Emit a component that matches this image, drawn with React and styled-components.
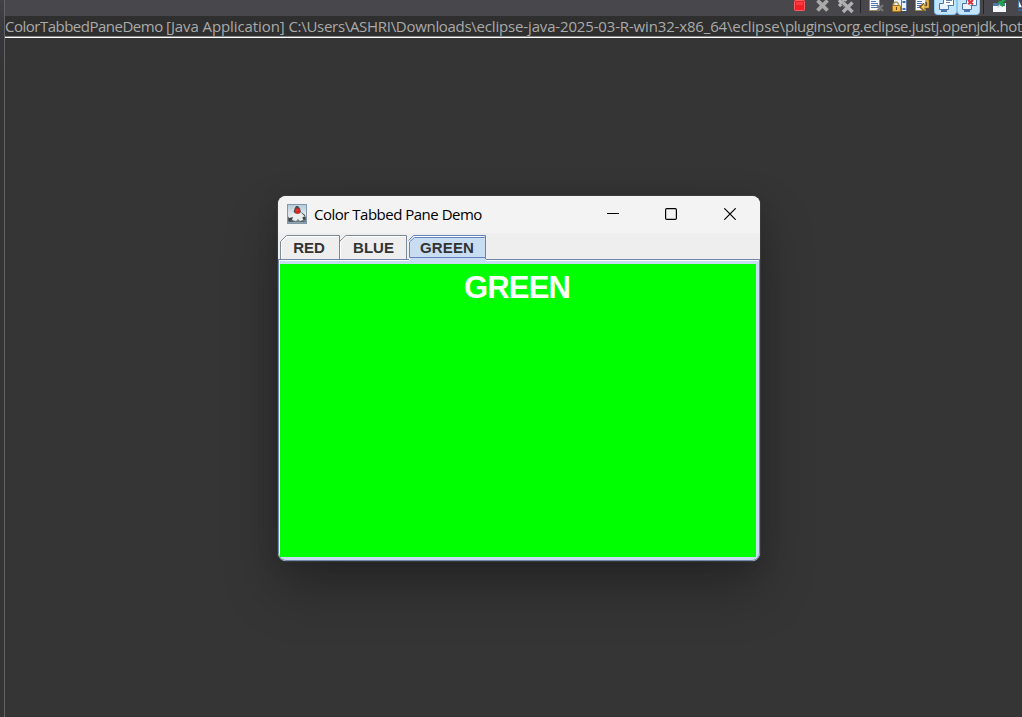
import React from 'react';
import styled, { createGlobalStyle } from 'styled-components';

const GlobalStyle = createGlobalStyle`
  * { box-sizing: border-box; }
  body { margin: 0; background: #353535; overflow: hidden; }
`;

const Workbench = styled.div`
  width: 1022px;
  height: 717px;
  display: flex;
  overflow: hidden;
  background: #353535;
`;

const Sash = styled.div`
  flex: none;
  width: 5px;
  background: linear-gradient(#434247 0, #37363a 36px, #353535 70px);
  border-right: 1px solid #626266;
`;

const Console = styled.main`
  flex: 1;
  min-width: 0;
  display: flex;
  flex-direction: column;
`;

const Toolbar = styled.div`
  flex: none;
  height: 16px;
  background: #48474c;
  display: flex;
  justify-content: flex-end;
  overflow: hidden;
`;

const ToolIcons = styled.svg`
  display: block;
  flex: none;
`;

const LaunchLabel = styled.div`
  flex: none;
  height: 22px;
  background: #2f2f2f;
  border-bottom: 1px solid #fff;
  box-shadow: inset 0 -1px #858585;
  color: #aaa;
  font: 15px/21px "Open Sans", "Noto Sans", sans-serif;
  white-space: pre;
  overflow: hidden;
`;

const Part = styled.span`
  letter-spacing: ${(p) => p.$track}px;
`;

const Desktop = styled.div`
  flex: 1;
  display: flex;
  align-items: flex-start;
  padding: 158px 0 0 273px;
`;

const Frame = styled.section`
  width: 482px;
  height: 365px;
  display: flex;
  flex-direction: column;
  border-radius: 8px;
  overflow: hidden;
  background: #eee;
  box-shadow: 0 0 0 1px rgba(75, 75, 75, 0.45), 0 28px 54px rgba(0, 0, 0, 0.28),
    0 2px 22px rgba(0, 0, 0, 0.12);
`;

const TitleBar = styled.header`
  flex: none;
  height: 37px;
  padding: 0 0 1px 9px;
  display: flex;
  align-items: center;
  background: #f3f3f3;
`;

const Title = styled.h1`
  flex: 1;
  margin: 0 0 0 7px;
  color: #000;
  font: 400 15px/20px "Open Sans", "Noto Sans", sans-serif;
  letter-spacing: -0.5px;
  white-space: nowrap;
`;

const Caption = styled.button`
  flex: none;
  width: ${(p) => p.$width}px;
  height: 36px;
  padding: 0;
  border: 0;
  background: none;
  display: flex;
  align-items: center;
  justify-content: center;
`;

const TabStrip = styled.nav`
  flex: none;
  height: 27px;
  padding: 2px 0 0 2px;
  display: flex;
  background: #eee;
  box-shadow: inset 0 -1px #6f86a8;
`;

const Tab = styled.div`
  position: relative;
  flex: none;
  width: ${(p) => p.$width}px;
  height: 25px;
  padding-right: ${(p) => p.$trim || 0}px;
  color: #333;
  font: bold 15px/25px "Liberation Sans", Arial, sans-serif;
  text-align: center;
  letter-spacing: ${(p) => p.$track || 0}px;
  z-index: ${(p) => (p.$front ? 1 : 0)};
`;

const TabOutline = styled.svg`
  position: absolute;
  inset: 0;
  overflow: visible;
`;

const TabText = styled.span`
  position: relative;
`;

const ContentBorder = styled.div`
  flex: 1;
  display: flex;
  padding: 4px 3px 3px 1px;
  background: #c8ddf2;
  border: solid #6f87ab;
  border-width: 0 1px 1px 1px;
  box-shadow: inset 1px 1px #fff;
  border-radius: 0 0 8px 8px;
`;

const ColorPanel = styled.div`
  flex: 1;
  padding: 6px 2px 0 0;
  background: #0f0;
  color: #fff;
  font: bold 31px/36px "Liberation Sans", Arial, sans-serif;
  letter-spacing: -0.8px;
  text-align: center;
`;

function ConsoleIcons() {
  return (
    <ToolIcons width="230" height="16" viewBox="792 0 230 16">
      <rect x="794.5" y="0.5" width="10" height="10" rx="0.8" fill="#ed2027" stroke="#ff5a60" />
      <rect x="796" y="2" width="7" height="3" fill="#fa444a" opacity="0.7" />
      <path d="M817.5 0.5L827.5 10.5M827.5 0.5L817.5 10.5" stroke="#a9a9a9" strokeWidth="3.8" />
      <path d="M839 0L846 7M846 -1L839 6" stroke="#b5b5b5" strokeWidth="3.2" />
      <path d="M843 2.5L852.5 12M852.5 2.5L843 12" stroke="#48474c" strokeWidth="4.8" />
      <path d="M843 2.5L852.5 12M852.5 2.5L843 12" stroke="#b0b0b0" strokeWidth="3.4" />
      <path d="M860.5 0V13" stroke="#242426" />

      <path d="M869.5 0V10.5H879.5V0" fill="#f4f7fd" stroke="#a18b52" />
      <path d="M871 1.5H876M871 3.5H878M871 5.5H878M871 7.5H878" stroke="#5277b5" />
      <path d="M877 5L883 11M883 5L877 11" stroke="#777" strokeWidth="2" />

      <rect x="894" y="0" width="12" height="11" fill="#e8f3ff" />
      <path d="M901.5 0V11M906.5 0V11" stroke="#60779e" />
      <path d="M904 1V3M904 8V10" stroke="#4b6aab" strokeWidth="3" />
      <path d="M893.5 6V4Q896 0 898.5 4V6" fill="none" stroke="#b39b5b" strokeWidth="1.5" />
      <rect x="892.5" y="5.5" width="8" height="6" rx="1" fill="#e9bd4e" stroke="#a76e17" />
      <path d="M896.5 7V10" stroke="#6c4815" />

      <path d="M915.5 0V10.5H925.5V0" fill="#f4f7fd" stroke="#a18b52" />
      <path d="M917 1.5H922M917 3.5H922M917 5.5H921M917 7.5H920" stroke="#5277b5" />
      <path d="M925 1H928V7H922M924.5 4L921 7L924.5 10" fill="none" stroke="#7e5315" strokeWidth="3" />
      <path d="M925 1H928V7H922M924.5 4.5L922 7L924.5 9.5" fill="none" stroke="#f1cc66" strokeWidth="1.4" />

      <rect x="934.5" y="-5" width="22" height="19.5" rx="3" fill="#c4e4fb" stroke="#8acbfa" />
      <rect x="957.5" y="-5" width="22" height="19.5" rx="3" fill="#c4e4fb" stroke="#8acbfa" />
      <path d="M943.5 -1V5.5H953.5V-1" fill="#fff" stroke="#4e75ab" />
      <path d="M946 0.5H952M946 2.5H950" stroke="#6681ac" />
      <path d="M943 3.5H939.5V9.5H948.5V6" fill="#e9f3ff" stroke="#4e75ab" />
      <path d="M941 11H947" stroke="#4e75ab" strokeWidth="2" />
      <path d="M966.5 -1V5.5H976.5V-1" fill="#fff" stroke="#4e75ab" />
      <path d="M968 0L973 4.5M973 0L968 4.5" stroke="#dc3340" strokeWidth="2.2" />
      <path d="M966 3.5H962.5V9.5H971.5V6" fill="#e9f3ff" stroke="#4e75ab" />
      <path d="M964 11H970" stroke="#4e75ab" strokeWidth="2" />

      <path d="M983.5 0V14" stroke="#242426" />
      <rect x="993" y="3" width="13" height="9" fill="#f4f8fb" />
      <rect x="993" y="3" width="12" height="3" fill="#477ba6" />
      <path d="M997.5 7.5L1001 4" stroke="#c4d6c7" strokeWidth="1.5" />
      <path d="M999 1.5L1003.5 6M1001 3L1005 -1" stroke="#20a347" strokeWidth="3" />
      <path d="M1018.5 0V7.5H1022" fill="#f3f7ff" stroke="#4e75ab" />
      <path d="M1018 10H1022" stroke="#365f9a" strokeWidth="2" />
    </ToolIcons>
  );
}

function DukeIcon() {
  return (
    <svg width="20" height="20" viewBox="0 0 20 20">
      <defs>
        <linearGradient id="sky" x2="0" y2="1">
          <stop stopColor="#b3c9d9" />
          <stop offset="0.5" stopColor="#e0e8ec" />
          <stop offset="1" stopColor="#a9bbc8" />
        </linearGradient>
      </defs>
      <rect x="0.5" y="0.5" width="19" height="19" fill="url(#sky)" stroke="#8199ad" />
      <path d="M1 14L5 11H15L19 13V18.5H1Z" fill="#74818a" />
      <path d="M1.5 13L6 9L7 13L4 17H1.5ZM14 8L18 11L18.5 16L14.5 15Z" fill="#3e4347" />
      <path d="M9 2L6.5 5L5.5 9L2 12V14L6 13L5 16L9 17L11 15L13 17L16 16L15.5 13L18 12.5L14.5 9L13 5Z" fill="#eceeee" />
      <path d="M9 2L7.5 4.5L6.5 8L8.5 9.5H12.5L14 8L13 4.5L11 2Z" fill="#4b4c50" />
      <path d="M2 17.5L5 16L8 18H2ZM12 18L15.5 16.5L18 18Z" fill="#555e65" />
      <circle cx="10.5" cy="7" r="2.7" fill="#dc2422" />
      <circle cx="10" cy="6.3" r="0.8" fill="#f34a40" />
    </svg>
  );
}

function PlainTab({ width, label, last }) {
  const right = last ? width - 1.5 : width - 0.5;
  const outline = last
    ? `M0 6L6 0.5H${right}V24`
    : `M0.5 24V6.5L6.5 0.5H${right}V24`;
  const shine = last
    ? `M0.5 23V7L6.5 1.5H${right - 1}`
    : `M1.5 23V7L7 1.5H${right - 1}`;
  return (
    <Tab $width={width} $trim={last ? 1 : 2}>
      <TabOutline width={width} height="25">
        <path d={outline} fill="none" stroke="#7a8a99" />
        <path d={shine} fill="none" stroke="#fff" />
      </TabOutline>
      <TabText>{label}</TabText>
    </Tab>
  );
}

function SelectedTab({ width, label }) {
  return (
    <Tab $width={width} $track={0.15} $front>
      <TabOutline width={width} height="28">
        <path d="M1 28V5L6 0H78V26H79V28Z" fill="#c8ddf2" />
        <path d="M0.5 5.5L5.5 0.5H77.5V24" fill="none" stroke="#6382bf" />
        <path d="M1.5 25V6L6 1.5H76" fill="none" stroke="#fff" />
        <path d="M1.5 22.5V7L6.5 2.5H76.5M1.5 22.5H77" fill="none" stroke="#6382bf" />
      </TabOutline>
      <TabText>{label}</TabText>
    </Tab>
  );
}

export default function App() {
  return (
    <>
      <GlobalStyle />
      <Workbench>
        <Sash />
        <Console>
          <Toolbar>
            <ConsoleIcons />
          </Toolbar>
          <LaunchLabel>
            <Part $track={-0.5}>ColorTabbedPaneDemo </Part>
            <Part $track={-0.09}>[Java Application] </Part>
            <Part $track={-0.3}>C:\Users\ASHRI\Downloads\</Part>
            <Part $track={-0.16}>eclipse-java-2025-03-R-win32-x86_64\</Part>
            <Part $track={-0.1}>eclipse\</Part>
            <Part $track={-0.42}>plugins\org.eclipse.justj.openjdk.hot</Part>
          </LaunchLabel>
          <Desktop>
            <Frame>
              <TitleBar>
                <DukeIcon />
                <Title>Color Tabbed Pane Demo</Title>
                <Caption $width={58} aria-label="Minimize">
                  <svg width="12" height="12"><path d="M0 5.5H12" stroke="#000" /></svg>
                </Caption>
                <Caption $width={58} aria-label="Maximize">
                  <svg width="12" height="12">
                    <rect x="0.6" y="0.6" width="10.8" height="10.8" rx="1.2" fill="none" stroke="#000" strokeWidth="1.2" />
                  </svg>
                </Caption>
                <Caption $width={60} aria-label="Close">
                  <svg width="12" height="12"><path d="M0.3 0.3L11.7 11.7M11.7 0.3L0.3 11.7" stroke="#000" strokeWidth="1.2" /></svg>
                </Caption>
              </TitleBar>
              <TabStrip>
                <PlainTab width={60} label="RED" />
                <PlainTab width={68} label="BLUE" last />
                <SelectedTab width={78} label="GREEN" />
              </TabStrip>
              <ContentBorder>
                <ColorPanel>GREEN</ColorPanel>
              </ContentBorder>
            </Frame>
          </Desktop>
        </Console>
      </Workbench>
    </>
  );
}
